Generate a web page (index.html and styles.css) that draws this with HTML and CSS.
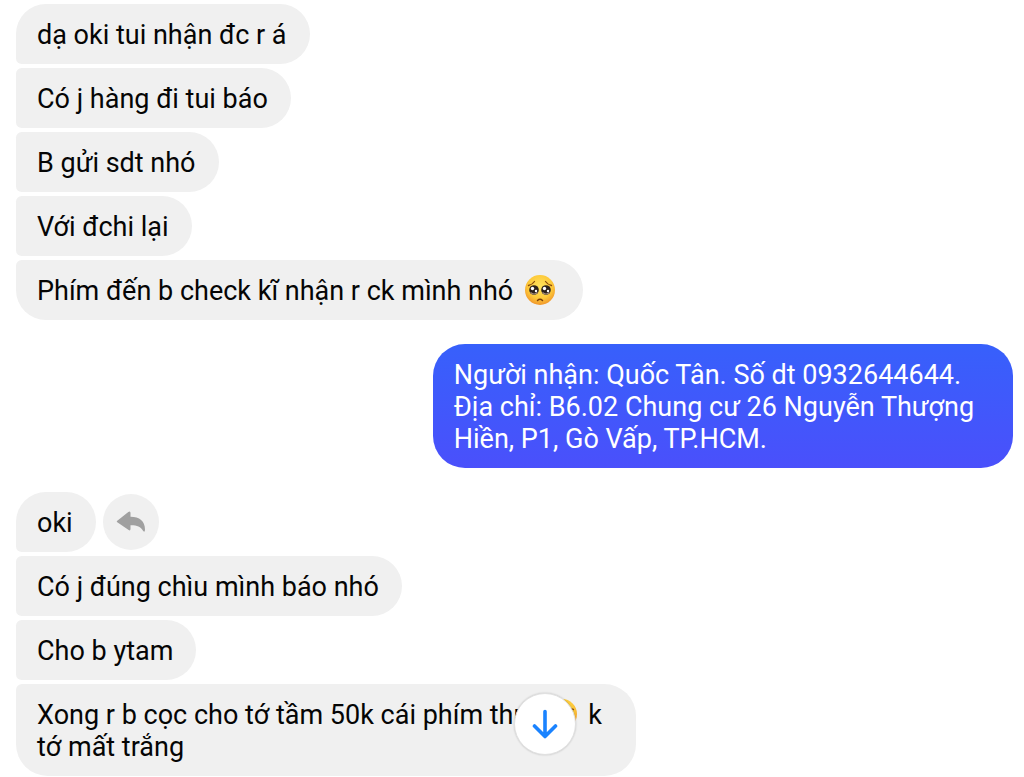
FILE: index.html
```html
<!DOCTYPE html>
<html lang="vi">
<head>
    <meta charset="UTF-8">
    <meta name="viewport" content="width=device-width, initial-scale=1">
    <title>Chat</title>
    <link rel="stylesheet" href="styles.css">
</head>
<body>
<!-- shared pleading face, used inside messages -->
<svg class="defs" aria-hidden="true">
    <defs>
        <radialGradient id="face" cx="50%" cy="38%" r="62%">
            <stop offset="0" stop-color="#ffe35c"/>
            <stop offset="0.65" stop-color="#fdc93a"/>
            <stop offset="1" stop-color="#f0952a"/>
        </radialGradient>
        <symbol id="pleading" viewBox="0 0 32 32">
            <circle cx="16" cy="15" r="15" fill="url(#face)"/>
            <path d="M4.500 10.500Q8.500 9.500 10.500 6.500M27.500 10.500Q23.500 9.500 21.500 6.500" fill="none" stroke="#8a4b0c" stroke-width="1.300" stroke-linecap="round"/>
            <circle cx="10" cy="15" r="4.800" fill="#2b211c"/>
            <circle cx="22" cy="15" r="4.800" fill="#2b211c"/>
            <path d="M6.500 17.500Q10 20.500 13.500 17.500M18.500 17.500Q22 20.500 25.500 17.500" fill="none" stroke="#a58c7c" stroke-width="1.200"/>
            <circle cx="8.500" cy="13.500" r="1.700" fill="#fff"/>
            <circle cx="20.500" cy="13.500" r="1.700" fill="#fff"/>
            <circle cx="12" cy="16" r="1.200" fill="#fff"/>
            <circle cx="24" cy="16" r="1.200" fill="#fff"/>
            <path d="M13.500 25.500Q16 23 18.500 25.500" fill="none" stroke="#7a3d0b" stroke-width="1.500" stroke-linecap="round"/>
        </symbol>
    </defs>
</svg>

<main class="chat">
    <div class="group">
        <p class="bubble first">dạ oki tui nhận đc r á</p>
        <p class="bubble">Có j hàng đi tui báo</p>
        <p class="bubble">B gửi sdt nhó</p>
        <p class="bubble">Với đchi lại</p>
        <p class="bubble last">Phím đến b check kĩ nhận r ck mình nhó <svg class="emoji" role="img" aria-label="🥺"><use href="#pleading"/></svg></p>
    </div>

    <div class="group mine">
        <p class="bubble">Người nhận: Quốc Tân. Số dt 0932644644. Địa chỉ: B6.02 Chung cư 26 Nguyễn Thượng Hiền, P1, Gò Vấp, TP.HCM.</p>
    </div>

    <div class="group">
        <div class="row">
            <p class="bubble first">oki</p>
            <button class="reply" type="button" aria-label="Trả lời">
                <svg viewBox="0 0 30 22" width="30" height="22">
                    <path d="M1.300 9.800L12.300 1Q14.500 -.4 14.500 2V5.800C23.500 5.800 29 10 29 18.500Q29 21.800 27.200 20C24.500 15.500 21 14.200 14.500 14.300V17.800Q14.500 20.500 12.300 18.800L1.300 11.300Q.3 10.500 1.300 9.800Z" fill="#a0a0a0"/>
                </svg>
            </button>
        </div>
        <p class="bubble">Có j đúng chìu mình báo nhó</p>
        <p class="bubble">Cho b ytam</p>
        <p class="bubble last">Xong r b cọc cho tớ tầm 50k cái phím thui <svg class="emoji" role="img" aria-label="🥺"><use href="#pleading"/></svg> k tớ mất trắng</p>
    </div>
</main>

<button class="to-bottom" type="button" aria-label="Cuộn xuống">
    <svg viewBox="0 0 28 30" width="28" height="30">
        <path d="M14 2.500V27M3.500 17L14 27.500L24.500 17" fill="none" stroke="#1a83ff" stroke-width="3.600" stroke-linecap="round" stroke-linejoin="round"/>
    </svg>
</button>
</body>
</html>
```
FILE: styles.css
```css
* {
    box-sizing: border-box;
}
body {
    margin: 0;
    background: #fff;
    color: #050505;
    font-family: Roboto, "Liberation Sans", sans-serif;
    font-size: 27px;
    line-height: 32px;
}
p {
    margin: 0;
}
button {
    display: flex;
    align-items: center;
    justify-content: center;
    padding: 0;
    border: 0;
    border-radius: 50%;
    cursor: pointer;
}
.defs {
    position: absolute;
    width: 0;
    height: 0;
}
.chat {
    display: flex;
    flex-direction: column;
    gap: 24px;
    padding: 4px 11px 0 16px;
}
.group {
    display: flex;
    flex-direction: column;
    align-items: flex-start;
    gap: 4px;
}
.bubble {
    max-width: 62.2%;
    padding: 15px 23px 13px 21px;
    border-radius: 6px 32px 32px 6px;
    background: #f0f0f0;
}
.bubble.first {
    border-top-left-radius: 32px;
}
.bubble.last {
    border-bottom-left-radius: 32px;
}
.mine {
    align-items: flex-end;
}
.mine .bubble {
    max-width: 58.2%;
    border-radius: 32px;
    background: linear-gradient(#3760fb, #4a50fb);
    color: #fff;
}
.row {
    display: flex;
    align-items: center;
    gap: 7px;
}
.row .bubble {
    max-width: none;
}
.reply {
    width: 56px;
    height: 56px;
    background: #f0f0f0;
}
.emoji {
    width: 32px;
    height: 32px;
    margin: 0 4px;
    vertical-align: top;
}
/* floats over the conversation */
.to-bottom {
    position: fixed;
    bottom: 22px;
    left: calc(50% + 2px);
    width: 62px;
    height: 62px;
    border: 1px solid #e0e0e0;
    background: #fff;
    box-shadow: 0 0 2px rgba(0, 0, 0, .2);
}
```
